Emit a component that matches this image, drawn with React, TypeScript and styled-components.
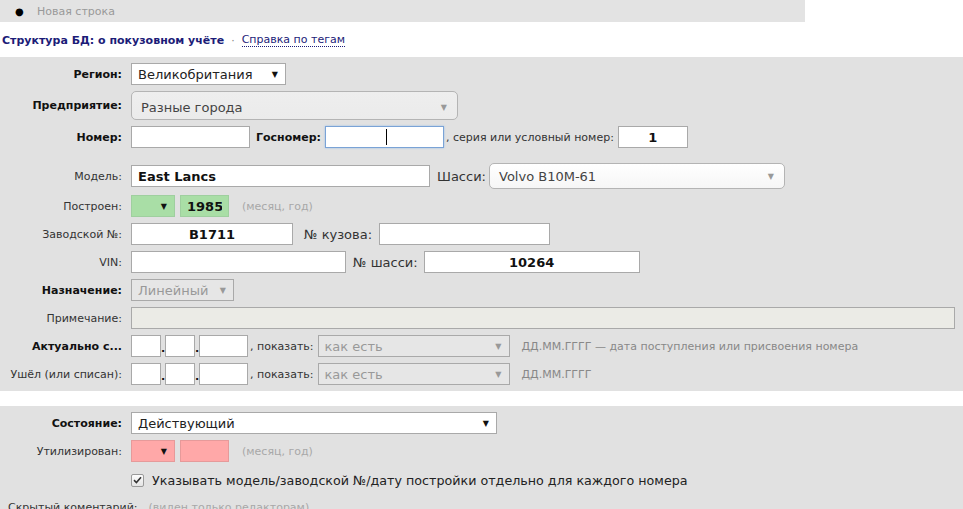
import styled, { createGlobalStyle } from "styled-components";

const GlobalStyle = createGlobalStyle`
    html, body {
        margin: 0;
        padding: 0;
        background: #ffffff;
        font-family: "DejaVu Sans", Verdana, sans-serif;
        font-size: 11px;
        color: #333;
    }
    * {
        box-sizing: border-box;
    }
`;

const FONT = `"DejaVu Sans", Verdana, sans-serif`;

const Page = styled.div`
    width: 963px;
    height: 509px;
    overflow: hidden;
`;

const TopBar = styled.div`
    width: 805px;
    height: 22px;
    background: #e3e3e3;
    display: flex;
    align-items: center;
    padding-left: 15px;
    color: #999;
    font-size: 11px;
`;

const Bullet = styled.span`
    color: #000;
    font-size: 10px;
    width: 22px;
`;

const LinksLine = styled.div`
    height: 35px;
    display: flex;
    align-items: center;
    padding-left: 2px;
    padding-top: 2px;
    font-size: 11px;
    gap: 6px;
`;

const StructLink = styled.a`
    color: #1c1c78;
    font-weight: bold;
    text-decoration: none;
`;

const Dot = styled.span`
    color: #888;
    padding: 0 1px;
`;

const HelpLink = styled.a`
    color: #1c1c78;
    text-decoration: none;
    border-bottom: 1px dotted #1c1c78;
    line-height: 12px;
`;

const Panel = styled.div<{ $mt?: number }>`
    background: #e1e1e1;
    padding: 6px 0;
    margin-top: ${({ $mt }) => $mt ?? 0}px;
    display: flex;
    flex-direction: column;
    gap: 6px;
`;

const Row = styled.div<{ $mt?: number }>`
    display: flex;
    align-items: center;
    margin-top: ${({ $mt }) => $mt ?? 0}px;
`;

const Label = styled.div<{ $bold?: boolean }>`
    width: 131px;
    flex-shrink: 0;
    padding-right: 9px;
    text-align: right;
    font-size: 11px;
    white-space: nowrap;
    font-weight: ${({ $bold }) => ($bold ? "bold" : "normal")};
    color: ${({ $bold }) => ($bold ? "#111" : "#333")};
`;

const InlineLabel = styled.span<{ $bold?: boolean; $ml?: number; $mr?: number }>`
    font-size: ${({ $bold }) => ($bold ? "11px" : "13px")};
    font-weight: ${({ $bold }) => ($bold ? "bold" : "normal")};
    color: ${({ $bold }) => ($bold ? "#111" : "#333")};
    margin-left: ${({ $ml }) => $ml ?? 0}px;
    margin-right: ${({ $mr }) => $mr ?? 0}px;
    white-space: nowrap;
`;

const SmallText = styled.span<{ $ml?: number; $mr?: number }>`
    font-size: 11px;
    color: #333;
    margin-left: ${({ $ml }) => $ml ?? 0}px;
    margin-right: ${({ $mr }) => $mr ?? 0}px;
    white-space: nowrap;
`;

const Hint = styled.span<{ $ml?: number; $light?: boolean }>`
    font-size: 11px;
    color: ${({ $light }) => ($light ? "#a8a8a8" : "#888")};
    margin-left: ${({ $ml }) => $ml ?? 0}px;
    white-space: nowrap;
`;

const Input = styled.input<{
    $w: number;
    $ml?: number;
    $bold?: boolean;
    $center?: boolean;
    $tone?: "green" | "pink" | "disabled";
    $focus?: boolean;
}>`
    width: ${({ $w }) => $w}px;
    height: 22px;
    margin: 0 0 0 ${({ $ml }) => $ml ?? 0}px;
    padding: 0 6px;
    font-family: ${FONT};
    font-size: 13px;
    font-weight: ${({ $bold }) => ($bold ? "bold" : "normal")};
    text-align: ${({ $center }) => ($center ? "center" : "left")};
    color: #111;
    outline: none;
    border: 1px solid
        ${({ $focus, $tone }) =>
            $focus ? "#7aa3d6" : $tone === "green" ? "#9fcf9f" : $tone === "pink" ? "#e69a9a" : "#a9a9a9"};
    box-shadow: ${({ $focus }) => ($focus ? "0 0 2px #9dc0ea" : "none")};
    background: ${({ $tone }) =>
        $tone === "green" ? "#a9dea6" : $tone === "pink" ? "#ffa8a8" : $tone === "disabled" ? "#ebebe6" : "#fff"};
`;

const FocusWrap = styled.span`
    position: relative;
    display: inline-flex;
    margin-left: 4px;
`;

const Caret = styled.span`
    position: absolute;
    left: 61px;
    top: 3px;
    width: 1px;
    height: 16px;
    background: #000;
`;

const Select = styled.div<{
    $w: number;
    $ml?: number;
    $tone?: "green" | "pink" | "disabled" | "plain";
}>`
    width: ${({ $w }) => $w}px;
    height: 22px;
    margin-left: ${({ $ml }) => $ml ?? 0}px;
    display: flex;
    align-items: center;
    justify-content: space-between;
    padding: 0 7px 0 6px;
    font-size: 13px;
    color: ${({ $tone }) => ($tone === "disabled" ? "#999" : "#222")};
    border: 1px solid
        ${({ $tone }) => ($tone === "green" ? "#9fcf9f" : $tone === "pink" ? "#e69a9a" : "#a9a9a9")};
    background: ${({ $tone }) =>
        $tone === "green" ? "#a9dea6" : $tone === "pink" ? "#ffa8a8" : $tone === "disabled" ? "#e6e6e6" : "#fff"};
`;

const Arrow = styled.span<{ $muted?: boolean }>`
    font-size: 8px;
    color: ${({ $muted }) => ($muted ? "#999" : "#111")};
`;

const Chosen = styled.div<{ $w: number; $ml?: number; $gray?: boolean }>`
    width: ${({ $w }) => $w}px;
    height: ${({ $gray }) => ($gray ? 29 : 26)}px;
    margin-left: ${({ $ml }) => $ml ?? 0}px;
    display: flex;
    align-items: center;
    justify-content: space-between;
    padding: ${({ $gray }) => ($gray ? "3px" : "1px")} 10px 0 9px;
    border: 1px solid #b4b4b4;
    border-radius: 5px;
    font-size: 13px;
    color: #444;
    background: ${({ $gray }) => ($gray ? "linear-gradient(#eeeeee, #ebebeb)" : "linear-gradient(#ffffff, #f6f6f6)")};
`;

const DateDot = styled.span`
    width: 4px;
    text-align: center;
    font-size: 11px;
    color: #111;
    font-weight: bold;
    align-self: flex-end;
    padding-bottom: 2px;
`;

const CheckRow = styled.label`
    display: flex;
    align-items: center;
    margin-left: 131px;
    height: 20px;
    margin-top: 2px;
    font-size: 12.7px;
    color: #222;
    gap: 8px;
`;

const CheckBox = styled.span`
    width: 13px;
    height: 13px;
    border: 1px solid #9a9a9a;
    border-radius: 2px;
    background: linear-gradient(#fdfdfd, #e4e4e4);
    display: flex;
    align-items: center;
    justify-content: center;
`;

const HiddenRow = styled.div`
    display: flex;
    align-items: center;
    padding-left: 8px;
    margin-top: 5px;
    font-size: 11px;
    color: #333;
`;

function DateInputs() {
    return (
        <>
            <Input $w={30} readOnly />
            <DateDot>.</DateDot>
            <Input $w={30} readOnly />
            <DateDot>.</DateDot>
            <Input $w={49} readOnly />
        </>
    );
}

export default function App() {
    return (
        <Page>
            <GlobalStyle />
            <TopBar>
                <Bullet>●</Bullet>
                Новая строка
            </TopBar>
            <LinksLine>
                <StructLink href="#">Структура БД: о покузовном учёте</StructLink>
                <Dot>·</Dot>
                <HelpLink href="#">Справка по тегам</HelpLink>
            </LinksLine>

            <Panel>
                <Row>
                    <Label $bold>Регион:</Label>
                    <Select $w={155}>
                        Великобритания
                        <Arrow>▼</Arrow>
                    </Select>
                </Row>
                <Row>
                    <Label $bold>Предприятие:</Label>
                    <Chosen $w={327} $gray>
                        Разные города
                        <Arrow $muted>▼</Arrow>
                    </Chosen>
                </Row>
                <Row>
                    <Label $bold>Номер:</Label>
                    <Input $w={119} readOnly />
                    <InlineLabel $bold $ml={6}>Госномер:</InlineLabel>
                    <FocusWrap>
                        <Input $w={119} $focus readOnly />
                        <Caret />
                    </FocusWrap>
                    <SmallText $ml={2} $mr={4}>, серия или условный номер:</SmallText>
                    <Input $w={70} $bold $center defaultValue="1" />
                </Row>
                <Row $mt={9}>
                    <Label>Модель:</Label>
                    <Input $w={299} $bold defaultValue="East Lancs" />
                    <InlineLabel $ml={7} $mr={3}>Шасси:</InlineLabel>
                    <Chosen $w={296}>
                        Volvo B10M-61
                        <Arrow $muted>▼</Arrow>
                    </Chosen>
                </Row>
                <Row>
                    <Label>Построен:</Label>
                    <Select $w={44} $tone="green">
                        <span />
                        <Arrow>▼</Arrow>
                    </Select>
                    <Input $w={49} $ml={5} $bold $center $tone="green" defaultValue="1985" />
                    <Hint $ml={13} $light>(месяц, год)</Hint>
                </Row>
                <Row>
                    <Label>Заводской №:</Label>
                    <Input $w={162} $bold $center defaultValue="B1711" />
                    <InlineLabel $ml={11} $mr={7}>№ кузова:</InlineLabel>
                    <Input $w={171} readOnly />
                </Row>
                <Row>
                    <Label>VIN:</Label>
                    <Input $w={215} readOnly />
                    <InlineLabel $ml={7} $mr={6}>№ шасси:</InlineLabel>
                    <Input $w={216} $bold $center defaultValue="10264" />
                </Row>
                <Row>
                    <Label $bold>Назначение:</Label>
                    <Select $w={103} $tone="disabled">
                        Линейный
                        <Arrow $muted>▼</Arrow>
                    </Select>
                </Row>
                <Row>
                    <Label>Примечание:</Label>
                    <Input $w={824} $tone="disabled" readOnly />
                </Row>
                <Row>
                    <Label $bold>Актуально с...</Label>
                    <DateInputs />
                    <SmallText $ml={2} $mr={4}>, показать:</SmallText>
                    <Select $w={192} $tone="disabled">
                        как есть
                        <Arrow $muted>▼</Arrow>
                    </Select>
                    <Hint $ml={12}>ДД.ММ.ГГГГ — дата поступления или присвоения номера</Hint>
                </Row>
                <Row>
                    <Label>Ушёл (или списан):</Label>
                    <DateInputs />
                    <SmallText $ml={2} $mr={4}>, показать:</SmallText>
                    <Select $w={192} $tone="disabled">
                        как есть
                        <Arrow $muted>▼</Arrow>
                    </Select>
                    <Hint $ml={12}>ДД.ММ.ГГГГ</Hint>
                </Row>
            </Panel>

            <Panel $mt={15}>
                <Row>
                    <Label $bold>Состояние:</Label>
                    <Select $w={366} $tone="plain">
                        Действующий
                        <Arrow>▼</Arrow>
                    </Select>
                </Row>
                <Row>
                    <Label>Утилизирован:</Label>
                    <Select $w={44} $tone="pink">
                        <span />
                        <Arrow>▼</Arrow>
                    </Select>
                    <Input $w={49} $ml={5} $tone="pink" readOnly />
                    <Hint $ml={13} $light>(месяц, год)</Hint>
                </Row>
                <CheckRow>
                    <CheckBox>
                        <svg width="9" height="8" viewBox="0 0 9 8">
                            <path d="M1 4.2 L3.4 6.5 L8 1.2" fill="none" stroke="#333" strokeWidth="1.6" />
                        </svg>
                    </CheckBox>
                    Указывать модель/заводской №/дату постройки отдельно для каждого номера
                </CheckRow>
                <HiddenRow>
                    Скрытый коментарий:
                    <Hint $ml={11} $light>(виден только редакторам)</Hint>
                </HiddenRow>
            </Panel>
        </Page>
    );
}
